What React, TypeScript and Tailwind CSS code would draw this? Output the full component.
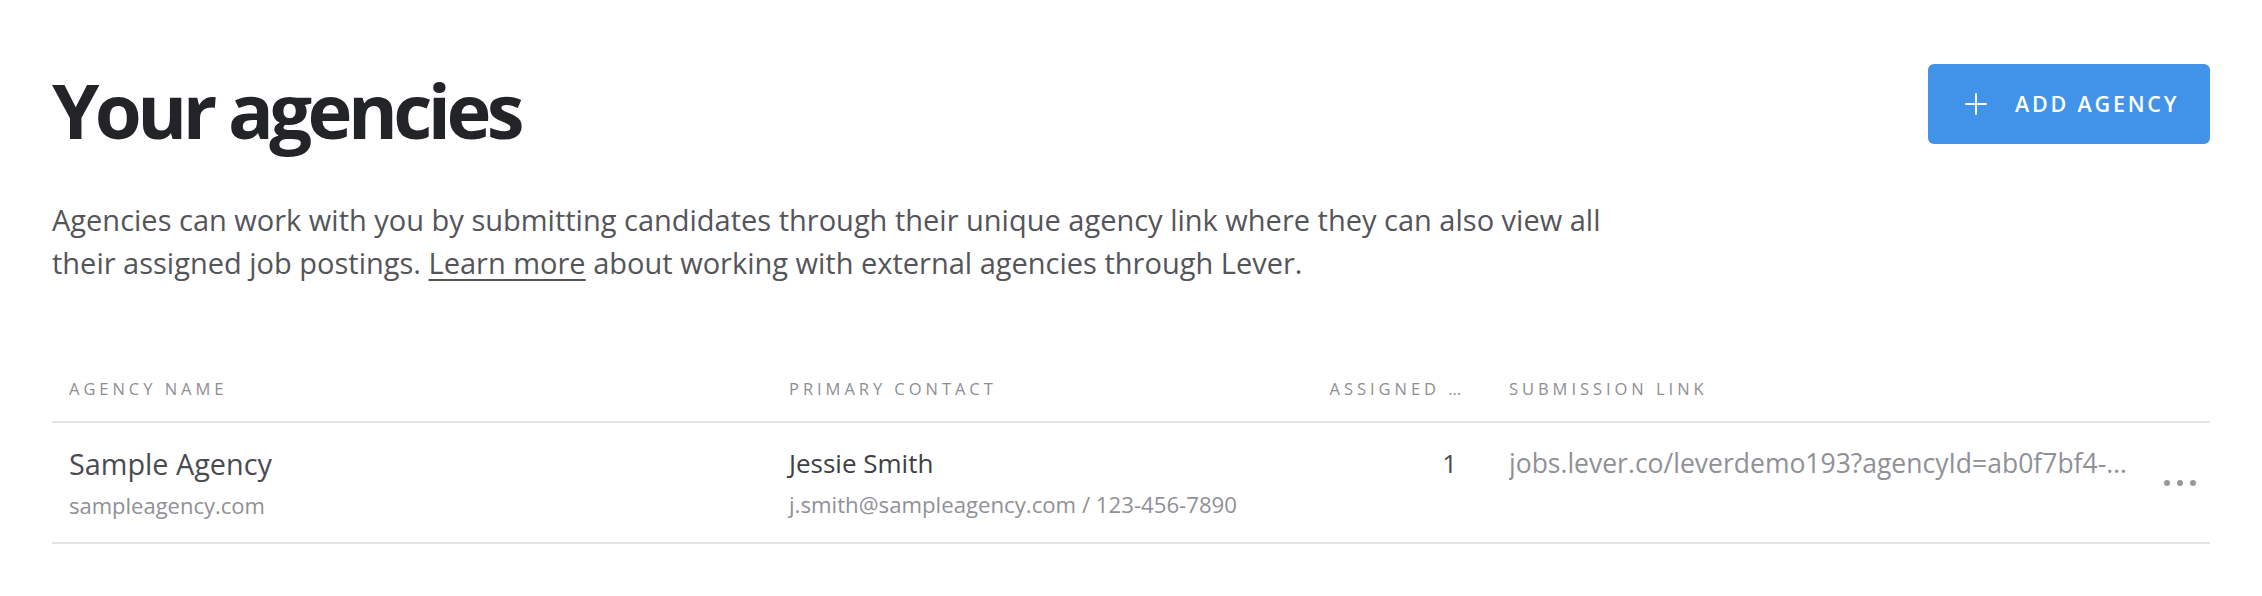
import { Plus } from "lucide-react";

const agencies = [
  {
    name: "Sample Agency",
    site: "sampleagency.com",
    contact: "Jessie Smith",
    contactInfo: "j.smith@sampleagency.com / 123-456-7890",
    assigned: 1,
    link: "jobs.lever.co/leverdemo193?agencyId=ab0f7bf4-8c1e-4d2a-9f3b-5e6a7c8d9e0f",
  },
];

const cols = "grid grid-cols-[720px_540px_170px_666px_64px]";

export default function App() {
  return (
    <div className="h-[596px] w-full bg-white px-[52px] pt-[64px] font-['Open_Sans',sans-serif]">
      <div className="flex items-start justify-between">
        <h1 className="mt-[8px] text-[76px] font-bold leading-[76px] tracking-[-0.06em] text-[#232428]">
          Your agencies
        </h1>
        <button className="flex h-[80px] w-[282px] items-center gap-[22px] rounded-[6px] bg-[#4193ea] pl-[31px] text-white">
          <Plus size={34} strokeWidth={1.4} />
          <span className="text-[21.5px] font-semibold uppercase tracking-[0.13em]">
            Add agency
          </span>
        </button>
      </div>

      <p className="mt-[50px] text-[29px] leading-[43px] text-[#54555a]">
        Agencies can work with you by submitting candidates through their unique agency link where they can also view all
        <br />
        their assigned job postings.{" "}
        <a href="#" className="underline decoration-2 underline-offset-[5px]">
          Learn more
        </a>{" "}
        about working with external agencies through Lever.
      </p>

      <div className="mt-[93px]">
        <div
          className={`${cols} border-b-2 border-[#e4e4e4] pb-[20px] text-[16.5px] font-medium uppercase leading-[24px] tracking-[0.24em] text-[#8d8f94]`}
        >
          <div className="pl-[17px]">Agency name</div>
          <div className="pl-[17px]">Primary contact</div>
          <div className="pr-[17px] text-right">Assigned …</div>
          <div className="pl-[27px]">Submission link</div>
          <div />
        </div>

        {agencies.map((a) => (
          <div
            key={a.name}
            className={`${cols} items-start border-b-2 border-[#e4e4e4] pt-[21px] pb-[20px]`}
          >
            <div className="pl-[17px]">
              <p className="text-[28.8px] leading-[39px] text-[#4a4b50]">{a.name}</p>
              <p className="mt-[7px] text-[22px] leading-[30px] text-[#8f9196]">{a.site}</p>
            </div>
            <div className="pl-[17px]">
              <p className="text-[26px] leading-[39px] text-[#3f4045]">{a.contact}</p>
              <p className="mt-[7px] text-[22.2px] leading-[30px] text-[#8f9196]">{a.contactInfo}</p>
            </div>
            <div className="pr-[25px] text-right text-[26px] leading-[39px] text-[#4a4b50]">
              {a.assigned}
            </div>
            <div className="min-w-0 pl-[27px] pr-[14px]">
              <p className="truncate text-[26.5px] leading-[39px] text-[#8f9196]">{a.link}</p>
            </div>
            <div className="flex h-[78px] items-center justify-end gap-[7px] pr-[16px]">
              <span className="size-[6px] rounded-full bg-[#97989c]" />
              <span className="size-[6px] rounded-full bg-[#97989c]" />
              <span className="size-[6px] rounded-full bg-[#97989c]" />
            </div>
          </div>
        ))}
      </div>
    </div>
  );
}
